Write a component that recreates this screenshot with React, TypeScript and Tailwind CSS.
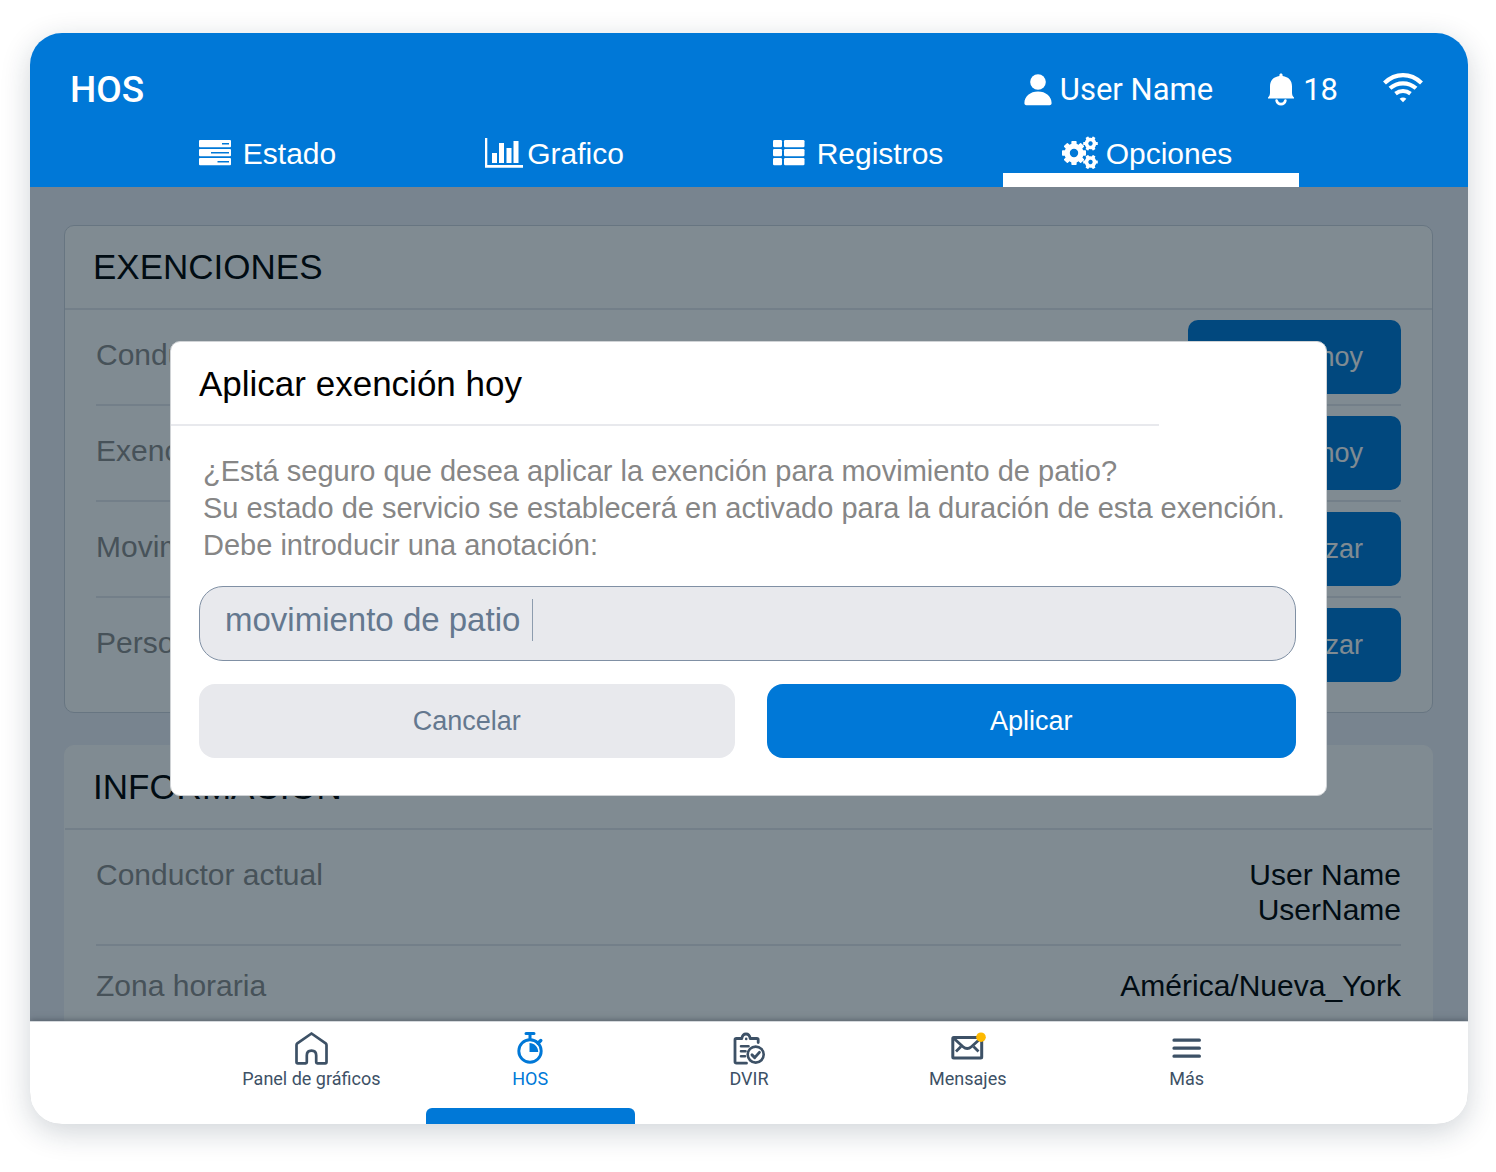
import { useState } from 'react';
import type { ReactNode } from 'react';
import clsx from 'clsx';

const arial = 'font-["Liberation_Sans",Arial,sans-serif]';
const roboto = 'font-[Roboto,sans-serif]';

/* Header icons */

function UserIcon() {
  return (
    <svg width="28" height="32" viewBox="0 0 28 32" fill="currentColor" aria-hidden="true">
      <circle cx="14" cy="8" r="7.8" />
      <path d="M0.4 29C0.4 22.5 6.2 17.6 14 17.6S27.6 22.5 27.6 29c0 1.4-0.6 2.2-2 2.2H2.4c-1.4 0-2-0.8-2-2.2Z" />
    </svg>
  );
}

function BellIcon() {
  return (
    <svg width="28" height="34" viewBox="0 0 28 34" fill="currentColor" aria-hidden="true">
      <path d="M14 0.5c1 0 1.600 0.700 1.600 1.600v1C21.500 3.900 25 7.700 25 13.300v6.200c0 2.300 0.600 3.800 2 5v1.100H1v-1.100c1.400-1.200 2-2.700 2-5v-6.200C3 7.700 6.500 3.900 12.400 3.100v-1c0-0.900 0.600-1.600 1.600-1.600Z" />
      <path d="M9.600 27.600c0.600 2.400 2.300 3.500 4.400 3.500s3.800-1.100 4.400-3.500" fill="none" stroke="currentColor" strokeWidth="2.600" strokeLinecap="round" />
    </svg>
  );
}

function WifiIcon() {
  return (
    <svg width="40" height="34" viewBox="0 0 40 34" fill="none" stroke="currentColor" strokeWidth="4.200" aria-hidden="true">
      <path d="M1.500 10C12.500 -0.400 27.500 -0.400 38.500 10" />
      <path d="M7 15.300C14.500 8.600 25.500 8.600 33 15.300" />
      <path d="M12.500 20.600C17 17.300 23 17.300 27.500 20.600" />
      <path d="M16.600 25.800C18.700 24 21.300 24 23.400 25.800L20 29.200Z" fill="currentColor" stroke="none" />
    </svg>
  );
}

function StatusIcon() {
  return (
    <svg width="32" height="26" viewBox="0 0 32 26" fill="currentColor" aria-hidden="true">
      <rect width="32" height="7.300" y="0" rx="1" />
      <rect width="32" height="7.300" y="9" rx="1" />
      <rect width="32" height="7.300" y="18" rx="1" />
      <g fill="#0078d7">
        <rect x="23" y="3" width="7" height="1.500" />
        <rect x="12" y="12" width="18" height="1.500" />
        <rect x="18.500" y="21" width="11.500" height="1.500" />
      </g>
    </svg>
  );
}

function ChartIcon() {
  return (
    <svg width="38" height="30" viewBox="0 0 38 30" fill="currentColor" aria-hidden="true">
      <path d="M0 0h2.300v27H38v2.700H0Z" />
      <rect x="7" y="15" width="5" height="10" />
      <rect x="14" y="5" width="5" height="20" />
      <rect x="21.500" y="10" width="5" height="15" />
      <rect x="28.500" y="3" width="5" height="22" />
    </svg>
  );
}

function ListIcon() {
  return (
    <svg width="32" height="26" viewBox="0 0 32 26" fill="currentColor" aria-hidden="true">
      {[0, 9, 18].map((y) => (
        <g key={y}>
          <rect x="0" y={y} width="9" height="7.300" rx="1.300" />
          <rect x="11" y={y} width="20.500" height="7.300" rx="1.300" />
        </g>
      ))}
    </svg>
  );
}

function Gear({ cx, cy, r, hole, teeth }: { cx: number; cy: number; r: number; hole: number; teeth: number }) {
  const body = r * 0.8;
  const width = r * 0.44;
  return (
    <g transform={`translate(${cx} ${cy})`}>
      <circle r={(body + hole) / 2} fill="none" stroke="currentColor" strokeWidth={body - hole} />
      {Array.from({ length: teeth }, (_, i) => (
        <rect
          key={i}
          x={-width / 2}
          y={-r}
          width={width}
          height={r - body + 1}
          rx={r * 0.06}
          transform={`rotate(${(360 / teeth) * i})`}
        />
      ))}
    </g>
  );
}

function GearsIcon() {
  return (
    <svg width="36" height="34" viewBox="0 0 36 34" fill="currentColor" aria-hidden="true">
      <Gear cx={12} cy={17} r={12} hole={4.2} teeth={8} />
      <g transform="rotate(30 28.500 7.500)">
        <Gear cx={28.5} cy={7.5} r={7.3} hole={2.2} teeth={6} />
      </g>
      <g transform="rotate(30 28.500 26)">
        <Gear cx={28.5} cy={26} r={7.3} hole={2.2} teeth={6} />
      </g>
    </svg>
  );
}

/* Bottom bar icons */

function HomeIcon() {
  return (
    <svg width="34" height="34" viewBox="0 0 34 34" fill="none" stroke="currentColor" strokeWidth="2.700" strokeLinejoin="round" aria-hidden="true">
      <path d="M17.500 2.500 3.300 12.400C2.800 12.800 2.500 13.300 2.500 14V31c0 0.900 0.500 1.300 1.300 1.300h7.900c0.700 0 1.100-0.400 1.100-1.100V24.500c0-3 1.900-4.800 4.700-4.800s4.700 1.800 4.700 4.800v6.700c0 0.700 0.400 1.100 1.100 1.100h7.900c0.800 0 1.300-0.400 1.300-1.300V14c0-0.700-0.300-1.200-0.800-1.600Z" />
    </svg>
  );
}

function StopwatchIcon() {
  return (
    <svg width="34" height="34" viewBox="0 0 34 34" fill="none" stroke="currentColor" strokeLinecap="round" aria-hidden="true">
      <circle cx="17" cy="20" r="11.200" strokeWidth="2.900" />
      <path d="M13 2.600h8M17 2.600v6" strokeWidth="3" />
      <path d="M25 12.300 27.800 9.500" strokeWidth="3.400" />
      <path d="M16.500 12v9h8.700c0-5-3.700-9-8.700-9Z" fill="currentColor" stroke="none" />
    </svg>
  );
}

function ClipboardIcon() {
  return (
    <svg width="34" height="34" viewBox="0 0 34 34" fill="none" stroke="currentColor" strokeWidth="2.800" strokeLinecap="round" strokeLinejoin="round" aria-hidden="true">
      <path d="M14.500 32.200H4.400c-0.900 0-1.400-0.500-1.400-1.400V8.900c0-0.900 0.500-1.400 1.400-1.400H9.800C10.300 4.500 11.600 3 14 3s3.700 1.500 4.200 4.500h6.600c0.900 0 1.400 0.500 1.400 1.400V11.500" />
      <circle cx="14.200" cy="7.900" r="1.300" fill="currentColor" stroke="none" />
      <path d="M9 15.300h7.500M9 20.300h4.500M9 25.300h4" strokeWidth="2.600" />
      <circle cx="23.700" cy="23.600" r="8" strokeWidth="2.600" />
      <path d="m20 23.900 2.700 2.700 4.700-5.200" strokeWidth="2.900" />
    </svg>
  );
}

function MailIcon() {
  return (
    <svg width="36" height="34" viewBox="0 0 36 34" fill="none" stroke="currentColor" strokeWidth="3" strokeLinejoin="round" aria-hidden="true">
      <rect x="2.800" y="6.500" width="28.900" height="20.500" rx="1" />
      <path d="M4 7.500 13 15.700c2.600 2.300 5.800 2.300 8.400 0L30.500 7.500" strokeWidth="2.800" />
      <path d="m11 15.500-5 5M23.500 15.500l5 5" strokeWidth="2.800" />
      <circle cx="31" cy="6.200" r="4.800" fill="#fdb900" stroke="none" />
    </svg>
  );
}

function MenuIcon() {
  return (
    <svg width="34" height="34" viewBox="0 0 34 34" stroke="currentColor" strokeWidth="3.200" strokeLinecap="round" aria-hidden="true">
      <path d="M4 9.200h25.400M4 17.200h25.400M4 25.200h25.400" />
    </svg>
  );
}

/* Data */

const tabs = [
  { label: 'Estado', icon: <StatusIcon />, spacing: 'gap-3' },
  { label: 'Grafico', icon: <ChartIcon />, spacing: 'gap-1' },
  { label: 'Registros', icon: <ListIcon />, spacing: 'gap-3' },
  { label: 'Opciones', icon: <GearsIcon />, spacing: 'gap-2 pr-2' },
];

const exemptions = [
  { label: 'Conducción adversa', action: 'Aplicar hoy' },
  { label: 'Exención de 16 horas', action: 'Aplicar hoy' },
  { label: 'Movimiento de patio', action: 'Utilizar' },
  { label: 'Personal', action: 'Utilizar' },
];

const navItems = [
  { label: 'Panel de gráficos', icon: <HomeIcon /> },
  { label: 'HOS', icon: <StopwatchIcon /> },
  { label: 'DVIR', icon: <ClipboardIcon /> },
  { label: 'Mensajes', icon: <MailIcon /> },
  { label: 'Más', icon: <MenuIcon /> },
];

function Header() {
  return (
    <header className="bg-[#0078d7] pt-[37px] text-white">
      <div className={clsx('flex h-10 items-center justify-between pr-[45px] pl-10', roboto)}>
        <h1 className="text-[37px] leading-10 font-medium">HOS</h1>
        <div className="flex items-center text-[31px] leading-10">
          <span className="flex items-center gap-2">
            <UserIcon />
            User Name
          </span>
          <span className="ml-[54px] flex items-center gap-2">
            <BellIcon />
            18
          </span>
          <span className="ml-[45px]">
            <WifiIcon />
          </span>
        </div>
      </div>
      <nav className="mt-[24px] grid grid-cols-[257fr_317fr_290fr_296fr] pr-[169px] pl-[109px]">
        {tabs.map((tab) => (
          <button key={tab.label} type="button" className="flex flex-col">
            <span className={clsx('flex h-[38px] w-full items-center justify-center text-[30px]', arial, tab.spacing)}>
              {tab.icon}
              {tab.label}
            </span>
            <span className={clsx('mt-px h-[14px] w-full', tab.label === 'Opciones' && 'bg-white')} />
          </button>
        ))}
      </nav>
    </header>
  );
}

function Card({ title, bordered, children }: { title: string; bordered?: boolean; children: ReactNode }) {
  return (
    <section
      className={clsx(
        'border bg-white',
        bordered ? 'rounded-[10px] border-[#ccd2dc]' : 'rounded-t-[10px] border-white',
      )}
    >
      <h2 className="border-b-2 border-[#e4e6ec] px-7 py-5 text-[35px] leading-[42px] text-black">{title}</h2>
      <div className="px-[31px]">{children}</div>
    </section>
  );
}

function Dialog() {
  const [note, setNote] = useState('movimiento de patio');

  return (
    <div
      role="dialog"
      aria-modal="true"
      aria-labelledby="dialog-title"
      className="w-full rounded-[10px] border border-[#d0d3d6] bg-white pb-[37px]"
    >
      <h2
        id="dialog-title"
        className="mr-[167px] border-b-2 border-[#e8e9ed] pt-[21px] pb-[19px] pl-[28px] text-[35px] leading-[42px] text-black"
      >
        Aplicar exención hoy
      </h2>
      <div className="pr-[30px] pl-[28px]">
        <label htmlFor="note" className="mt-[27px] block pl-1 text-[29px] leading-[37px] whitespace-nowrap text-[#868686]">
          ¿Está seguro que desea aplicar la exención para movimiento de patio?
          <br />
          Su estado de servicio se establecerá en activado para la duración de esta exención.
          <br />
          Debe introducir una anotación:
        </label>
        <div className="relative mt-[22px]">
          <input
            id="note"
            type="text"
            value={note}
            onChange={(e) => setNote(e.target.value)}
            className="block h-[75px] w-full rounded-[24px] border border-[#8090a4] bg-[#e8e9ed] px-[25px] pb-[7px] text-[33px] text-[#64788f] outline-none"
          />
          {/* Caret */}
          <span className="absolute top-[13px] left-[333px] h-[42px] w-px bg-[#8d9cae]" />
        </div>
        <div className="mt-[23px] grid grid-cols-[535fr_529fr] gap-8 text-[27px]">
          <button type="button" className="h-[74px] rounded-[16px] bg-[#e8e9ed] text-[#64788f]">
            Cancelar
          </button>
          <button type="button" className="h-[74px] rounded-[16px] bg-[#0078d7] text-white">
            Aplicar
          </button>
        </div>
      </div>
    </div>
  );
}

function BottomNav() {
  return (
    <nav
      className={clsx(
        'relative grid grid-cols-5 border-t border-[#d5d9dd] bg-white px-[172px] pt-[9px] text-[18px] text-[#3d5166] shadow-[0_-1px_6px_rgba(60,70,80,0.6)]',
        roboto,
      )}
    >
      {navItems.map((item) => {
        const active = item.label === 'HOS';
        return (
          <button key={item.label} type="button" className={clsx('flex flex-col items-center', active && 'text-[#0078d7]')}>
            {item.icon}
            <span className="mt-[2px] leading-6">{item.label}</span>
            <span className="mt-[17px] flex h-4 w-full px-[5px]">
              {active && <span className="w-full rounded-t-[6px] bg-[#0078d7]" />}
            </span>
          </button>
        );
      })}
    </nav>
  );
}

export default function App() {
  return (
    <div className={clsx('min-h-screen bg-white pt-[33px] pr-[28px] pb-[48px] pl-[30px]', arial)}>
      <div className="overflow-hidden rounded-[32px] shadow-[0_8px_30px_rgba(20,40,60,0.2)]">
        <Header />

        <main className="relative bg-[#eef0f8]">
          <div className="flex flex-col gap-8 pt-[38px] pr-[35px] pl-[34px] text-[30px] leading-[35px]">
            <Card title="EXENCIONES" bordered>
              <ul className="divide-y-2 divide-[#e4e6ec] pb-[20px]">
                {exemptions.map((item) => (
                  <li key={item.label} className="flex items-center justify-between py-[10px]">
                    <span className="pb-[6px] text-[#8c8c8c]">{item.label}</span>
                    <button
                      type="button"
                      className="h-[74px] w-[213px] rounded-[10px] bg-[#0078d7] pr-[38px] text-right text-[27px] text-white"
                    >
                      {item.action}
                    </button>
                  </li>
                ))}
              </ul>
            </Card>

            <Card title="INFORMACIÓN">
              <dl>
                <div className="flex justify-between border-b-2 border-[#e4e6ec] pt-[27px] pb-[17px]">
                  <dt className="text-[#8c8c8c]">Conductor actual</dt>
                  <dd className="text-right text-black">
                    User Name
                    <br />
                    UserName
                  </dd>
                </div>
                <div className="flex justify-between pt-[22px] pb-[17px]">
                  <dt className="text-[#8c8c8c]">Zona horaria</dt>
                  <dd className="text-black">América/Nueva_York</dd>
                </div>
              </dl>
            </Card>
          </div>

          {/* Backdrop */}
          <div className="absolute inset-0 bg-[#021826]/50 pt-[154px] pr-[141px] pl-[140px]">
            <Dialog />
          </div>
        </main>

        <BottomNav />
      </div>
    </div>
  );
}
